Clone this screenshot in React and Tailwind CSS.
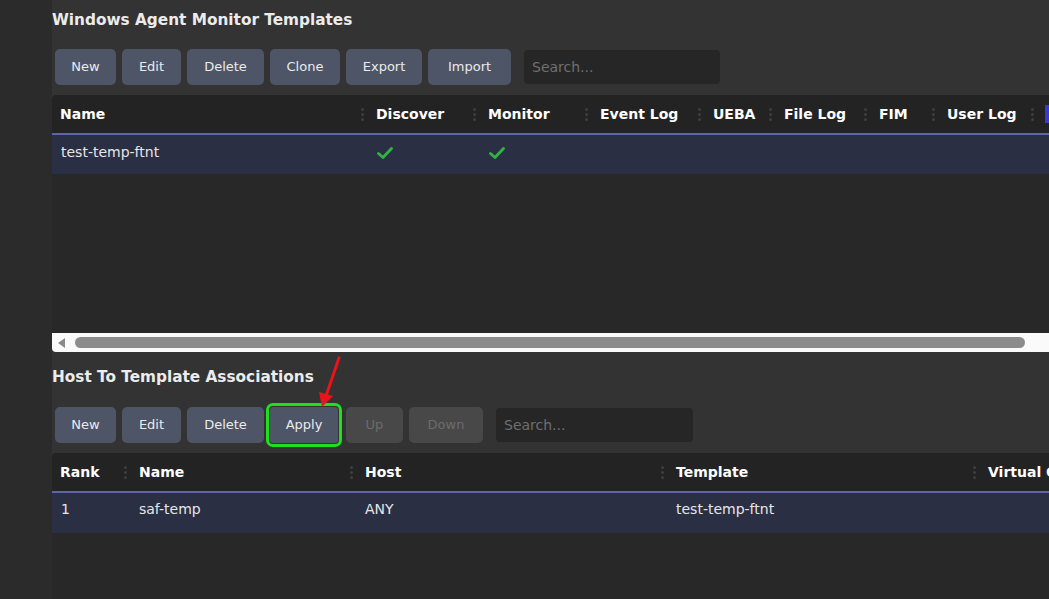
import React from "react";

const FONT = "font-['DejaVu_Sans',Verdana,sans-serif]";

const Btn = ({ label, disabled, highlight, w }) => (
  <button
    className={
      "h-[36px] text-[13px] flex items-center justify-center " +
      w +
      (disabled ? " bg-[#484848] text-[#6c6c6c]" : " bg-[#4d5567] text-[#ebebeb]") +
      (highlight
        ? " rounded-[3px] outline-[3px] outline-solid outline-[#1fe01f] outline-offset-[1px]"
        : " rounded-[5px]")
    }
  >
    {label}
  </button>
);

const Dots = () => (
  <span className="flex flex-col gap-[2px] mr-[4px]">
    <span className="w-[3px] h-[3px] rounded-full bg-[#3e3e3e]" />
    <span className="w-[3px] h-[3px] rounded-full bg-[#3e3e3e]" />
    <span className="w-[3px] h-[3px] rounded-full bg-[#3e3e3e]" />
  </span>
);

const HeadCell = ({ label, w, last }) => (
  <div className={"flex items-center justify-between pl-2 shrink-0 " + w}>
    <span className="text-[14px] font-bold text-white whitespace-nowrap">{label}</span>
    {!last && <Dots />}
  </div>
);

const Check = () => (
  <svg width="16" height="14" viewBox="0 0 16 14">
    <path d="M1.5 7.5 L6 11.5 L14.5 2.5" stroke="#2fb545" strokeWidth="2.8" fill="none" strokeLinecap="round" strokeLinejoin="round" />
  </svg>
);

const Search = ({ w }) => (
  <div className={"h-[34px] rounded-[4px] bg-[#262626] flex items-center px-2 text-[14px] text-[#6f6f6f] " + w}>
    Search...
  </div>
);

const cols1 = [
  ["Name", "w-[316px]"],
  ["Discover", "w-[112px]"],
  ["Monitor", "w-[112px]"],
  ["Event Log", "w-[113px]"],
  ["UEBA", "w-[71px]"],
  ["File Log", "w-[95px]"],
  ["FIM", "w-[68px]"],
  ["User Log", "w-[99px]"],
];

const cols2 = [
  ["Rank", "w-[79px]"],
  ["Name", "w-[226px]"],
  ["Host", "w-[311px]"],
  ["Template", "w-[312px]"],
  ["Virtual Collector", "w-[140px]"],
];

export default function App() {
  return (
    <div className={"relative w-[1049px] h-[599px] overflow-hidden flex bg-[#333333] " + FONT}>
      <div className="w-[52px] shrink-0 bg-[#2b2b2b]" />
      <div className="flex-1 flex flex-col min-w-0">
        <h2 className="mt-[9px] h-[22px] leading-[22px] text-[15.3px] font-bold text-[#ececec] whitespace-nowrap">
          Windows Agent Monitor Templates
        </h2>
        <div className="mt-[18px] ml-[3px] flex items-center gap-[6px]">
          <Btn label="New" w="w-[61px]" />
          <Btn label="Edit" w="w-[59px]" />
          <Btn label="Delete" w="w-[77px]" />
          <Btn label="Clone" w="w-[70px]" />
          <Btn label="Export" w="w-[76px]" />
          <Btn label="Import" w="w-[83px]" />
          <div className="ml-[7px]">
            <Search w="w-[196px]" />
          </div>
        </div>

        <div className="mt-[10px] w-[1100px] flex flex-col">
          <div className="h-[38px] bg-[#232323] rounded-tl-[4px] flex">
            {cols1.map(([l, w]) => (
              <HeadCell key={l} label={l} w={w} />
            ))}
            <div className="flex items-center pl-[7px]">
              <span className="w-[5px] h-[18px] bg-[#3a3ad0]" />
            </div>
          </div>
          <div className="h-[41px] pb-[4px] border-t-2 border-[#5b66a3] bg-[#2b2f44] flex items-center text-[14px] text-[#e6e6e6]">
            <div className="w-[316px] pl-[9px] shrink-0">test-temp-ftnt</div>
            <div className="w-[112px] pl-[9px] shrink-0 flex"><Check /></div>
            <div className="w-[112px] pl-[9px] shrink-0 flex"><Check /></div>
          </div>
          <div className="h-[159px] bg-[#282828]" />
        </div>
        <div className="h-[19px] bg-[#fafafa] rounded-bl-[4px] flex items-center pl-[6px] pr-[24px]">
          <span className="w-0 h-0 border-y-[5px] border-y-transparent border-r-[7px] border-r-[#8a8a8a]" />
          <span className="ml-[10px] flex-1 h-[11px] rounded-full bg-[#8c8c8c]" />
        </div>

        <h2 className="mt-[14px] h-[22px] leading-[22px] text-[15.3px] font-bold text-[#ececec] whitespace-nowrap">
          Host To Template Associations
        </h2>
        <div className="mt-[19px] ml-[3px] flex items-center gap-[6px]">
          <Btn label="New" w="w-[61px]" />
          <Btn label="Edit" w="w-[59px]" />
          <Btn label="Delete" w="w-[77px]" />
          <Btn label="Apply" w="w-[68px]" highlight />
          <Btn label="Up" w="w-[57px] ml-[2px]" disabled />
          <Btn label="Down" w="w-[74px]" disabled />
          <div className="ml-[7px]">
            <Search w="w-[197px]" />
          </div>
        </div>

        <div className="mt-[10px] w-[1100px] flex flex-col flex-1">
          <div className="h-[38px] bg-[#232323] rounded-tl-[4px] flex shrink-0">
            {cols2.map(([l, w], i) => (
              <HeadCell key={l} label={l} w={w} last={i === cols2.length - 1} />
            ))}
          </div>
          <div className="h-[42px] pb-[7px] shrink-0 border-t-2 border-[#5b66a3] bg-[#2b2f44] flex items-center text-[14px] text-[#e6e6e6]">
            <div className="w-[79px] pl-[9px] shrink-0">1</div>
            <div className="w-[226px] pl-[8px] shrink-0">saf-temp</div>
            <div className="w-[311px] pl-[8px] shrink-0">ANY</div>
            <div className="w-[312px] pl-[8px] shrink-0">test-temp-ftnt</div>
          </div>
          <div className="flex-1 bg-[#282828]" />
        </div>
      </div>

      <svg className="absolute left-[310px] top-[354px]" width="40" height="56" viewBox="0 0 40 56">
        <line x1="29" y1="4" x2="16" y2="42" stroke="#e8141a" strokeWidth="3" strokeLinecap="round" />
        <polygon points="9,38 23,42 12,53" fill="#e8141a" />
      </svg>
    </div>
  );
}
